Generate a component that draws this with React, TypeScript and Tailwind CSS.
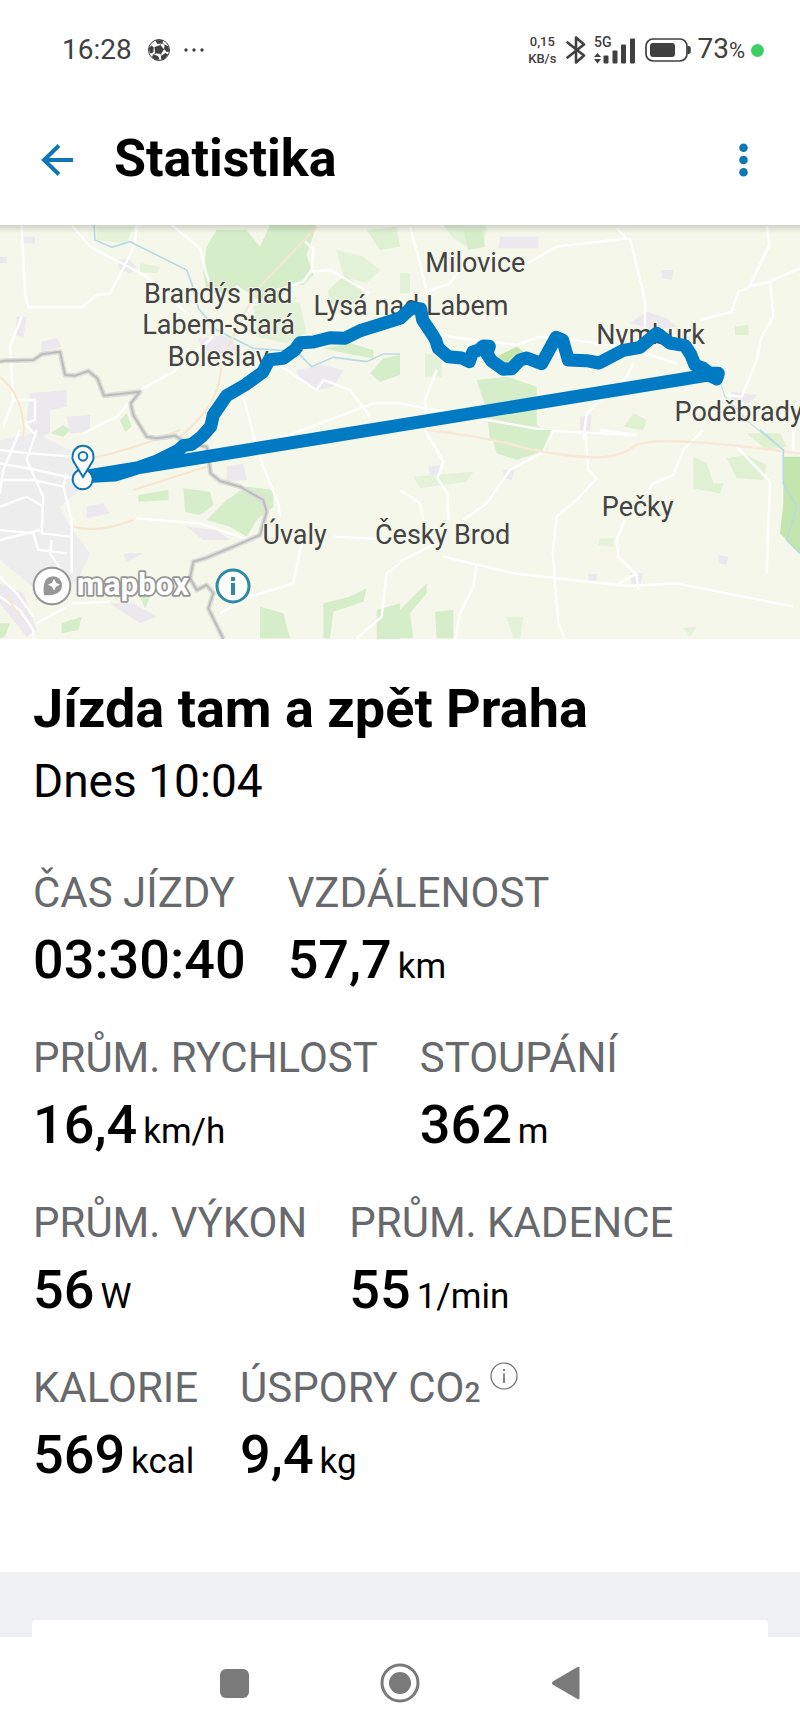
import type { ReactNode } from "react";

interface StatProps {
  label: ReactNode;
  value: string;
  unit?: string;
}

interface Place {
  name: string;
  x: number;
  y: number;
}

// Map units: the viewBox is 2400 x 1242
const places: Place[] = [
  { name: "Brandýs nad", x: 655, y: 233 },
  { name: "Labem-Stará", x: 656, y: 327 },
  { name: "Boleslav", x: 655, y: 422 },
  { name: "Lysá nad Labem", x: 1233, y: 271 },
  { name: "Milovice", x: 1426, y: 140 },
  { name: "Nymburk", x: 1952, y: 358 },
  { name: "Poděbrady", x: 2216, y: 587 },
  { name: "Úvaly", x: 884, y: 957 },
  { name: "Český Brod", x: 1328, y: 957 },
  { name: "Pečky", x: 1913, y: 873 },
];

const route =
  "M250 755 L345 750 L400 733 L470 708 L535 676 L550 662 L575 658 L605 635 L632 605 L640 570 L680 512 L735 480 L788 442 L808 404 L850 400 L885 374 L900 353 L940 351 L990 338 L1035 340 L1080 317 L1200 280 L1235 248 L1262 252 L1268 285 L1298 330 L1307 345 L1315 370 L1345 395 L1385 399 L1408 410 L1418 381 L1435 376 L1450 363 L1468 364 L1460 385 L1475 408 L1510 433 L1535 431 L1560 405 L1580 399 L1625 416 L1668 337 L1688 345 L1705 405 L1760 407 L1797 414 L1870 376 L1920 367 L1970 325 L2010 354 L2055 362 L2072 388 L2085 420 L2110 430 L2130 445 L2155 445 L2150 462 L2125 450 L250 755";

const border =
  "M0 410L15 407 100 405 125 388 180 380 195 450 225 452 265 438 292 460 312 512 420 500 392 535 400 570 440 635 470 640 525 632 560 655 620 665 632 745 660 768 720 785 790 825 800 860 780 930 700 965 615 1000 580 1010 570 1060 590 1095 620 1080 640 1105 625 1150 670 1242";

function StatusBar() {
  return (
    <div className="flex h-24 items-center justify-between pt-1 pr-9 pl-[62px] text-[#404040]">
      <div className="flex items-center">
        <span className="text-[28px] leading-8">16:28</span>
        <svg className="ml-4 size-[22px]" viewBox="0 0 22 22" aria-hidden="true">
          <circle cx="11" cy="11" r="10.5" fill="#fff" stroke="currentColor" />
          <g fill="currentColor">
            <path d="M6.500 8l6-2 3.500 4.500-3 4.500-6-.8z" />
            <path d="M7 1.200L15 1l-.5 3.200-5 .9z" />
            <path d="M16.500 5.500l4 2 .8 5-2.600.5-2.500-3z" />
            <path d="M13 17l4.500-3 2.500 1.500-3.500 4.700-3.300.6z" />
            <path d="M5 15.500l5 1.500 1.500 3.500-3.500.5-4-2.800z" />
            <path d="M.6 9l3-2.500 2.200 2-.6 5-3 1z" />
          </g>
          <path
            d="M12.500 6l1.500-2.200 2.500 1.700M15.500 10l1.500 0M13 14.500v2M8 14l-2.500 1.500"
            fill="none"
            stroke="currentColor"
            strokeWidth=".7"
          />
        </svg>
        <svg className="ml-3.5 h-1 w-5" viewBox="0 0 20 4" fill="currentColor" aria-hidden="true">
          <circle cx="2" cy="2" r="1.700" />
          <circle cx="10" cy="2" r="1.700" />
          <circle cx="18" cy="2" r="1.700" />
        </svg>
      </div>
      <div className="flex items-center">
        <div className="text-center text-[13px] leading-[17px] font-medium">
          <div>0,15</div>
          <div>KB/s</div>
        </div>
        <svg className="ml-2.5 h-[30px] w-5" viewBox="0 0 20 30" aria-label="Bluetooth">
          <path
            d="M1.500 7.500L18 20.500 10 27.500V2.500L18 9.500 1.500 22.500"
            fill="none"
            stroke="currentColor"
            strokeWidth="2.600"
            strokeLinejoin="round"
            strokeLinecap="round"
          />
        </svg>
        <svg className="ml-2 h-9 w-[41px]" viewBox="0 0 41 36" fill="currentColor" aria-hidden="true">
          <text x="0" y="15" fontSize="14" fontWeight="500">
            5G
          </text>
          <path d="M0 25L3.500 21 7 25zM0 27H7L3.500 31.500z" />
          <rect x="9.500" y="23.500" width="5" height="8" rx="1" />
          <rect x="18.500" y="18.500" width="5" height="13" rx="1" />
          <rect x="27" y="12.500" width="5" height="19" rx="1" />
          <rect x="36" y="6.500" width="5" height="25" rx="1" />
        </svg>
        <svg className="ml-2.5 h-6 w-[46px]" viewBox="0 0 46 24" aria-hidden="true">
          <rect x="1" y="1" width="41" height="22" rx="7" fill="none" stroke="currentColor" strokeWidth="1.700" />
          <rect x="5" y="5" width="25" height="14" rx="3" fill="currentColor" />
          <path d="M42.500 8c2 0 3.200.6 3.200 2v4c0 1.400-1.200 2-3.200 2z" fill="currentColor" />
        </svg>
        <span className="ml-1.5 text-[28px] leading-8">
          73<span className="text-[22px]">%</span>
        </span>
        <span className="ml-1.5 size-[13px] rounded-full bg-[#3ccf64]" />
      </div>
    </div>
  );
}

function Header() {
  return (
    <header className="flex h-[129px] items-center px-[37px] pb-0.5 text-[#0f76b5]">
      <button type="button" aria-label="Zpět" className="flex size-10 items-center justify-center">
        <svg className="h-8 w-8" viewBox="0 0 32 32" fill="none" stroke="currentColor" strokeWidth="4">
          <path d="M32 16H3M18 1.500L3 16l15 14.500" />
        </svg>
      </button>
      <h1 className="ml-[37px] flex-1 pb-0.5 text-[52px] leading-[64px] font-bold text-black">Statistika</h1>
      <button type="button" aria-label="Další možnosti" className="flex h-10 w-10 items-center justify-center">
        <svg className="h-[34px] w-[9px]" viewBox="0 0 9 34" fill="currentColor">
          <circle cx="4.500" cy="4.800" r="4.300" />
          <circle cx="4.500" cy="17" r="4.300" />
          <circle cx="4.500" cy="29.200" r="4.300" />
        </svg>
      </button>
    </header>
  );
}

function MapTerrain() {
  return (
    <>
      {/* north-west */}
      <g transform="translate(0 -15)">
        <g fill="#d6edc9">
          <path d="M620 80l30-50 90 0 40 50 30-65 140 0-30 90 20 60-30 30-50 0-30 50-60-10-60-40-40 30-50-10-10-60z" />
          <path d="M760 260l60-30 80 20 20 90-60 30-90-20z" opacity=".6" />
          <path d="M985 210l50-45 40 30 20 40-50 20-60-5zM1100 30l90-10 10 60-60 10z" opacity=".7" />
          <path d="M1010 90l80 20 50 40-40 40-70-20z" opacity=".5" />
          <path d="M1110 460l40-45 50-10v60l-60 20zM970 385l80-15 70 20 0 25-60-10z" />
          <path d="M290 20l110 0-20 50-90-10zM420 130l60 10-10 20-50-5z" opacity=".5" />
          <path d="M150 640l40-25 20 15-20 20zM360 600l20-20 15 40-20 15z" />
        </g>
        <g fill="#ebe9ee">
          <path d="M70 50h35v20h-35zM350 120l30-5 30 25-20 20-30-10zM0 110h20v20H0zM125 365l45-10 15 25-60 15z" />
          <path d="M595 355l90-10 30 40-30 20-80-15zM890 450l80-15 60 15-30 50-50 10-50-30z" />
          <path d="M90 520l110-10 0 50-50 10 0 70-50 20-20-60zM200 590l70-5 0 50-60 5zM50 290l30 0-10 60-25-5z" />
        </g>
        <g fill="none" stroke="#fff" strokeWidth="7">
          <path d="M65 15L75 220 85 262 245 262 290 225 330 220 375 135 405 70 410 15" />
          <path d="M215 15L270 80 375 135 440 170 560 280 M515 15L600 85 620 165 640 220" />
          <path d="M915 65L940 85 935 150 910 185 830 210 M935 155L990 150 1110 220" />
          <path d="M65 290L30 380 40 540 10 620 M40 540H105V600L75 610 110 650" />
          <path d="M420 510L520 455 640 350 M420 510L350 590 250 640 M845 440L950 510 970 480 1050 510 1110 590 M730 530L765 660 M840 655L1120 550H1200" />
        </g>
        <path
          d="M282 15L285 60 335 82 390 65 440 90 560 150 575 190 595 265 650 330 760 385 890 395 935 440 1000 412 1100 425 1150 402 1200 402"
          fill="none"
          stroke="#b9dbe6"
          strokeWidth="5"
        />
        <path d="M0 470Q50 510 65 580T60 660M540 650Q650 560 660 470T780 200L950 20" fill="none" stroke="#f6e6cf" strokeWidth="6" />
      </g>
      {/* north-east */}
      <g transform="translate(1200 -15)">
        <g fill="#d6edc9">
          <path d="M130 15h130l-10 70-40 0-50-30zM0 160h30v60H0zM75 400l50 10 0 60-50 0z" opacity=".6" />
          <path d="M190 30l55 0 10 50-50 10z" />
          <path d="M290 410l60-30 40 30-50 40z" fill="#c5e5ac" />
          <path d="M230 480l90-10 90 30 0 110 30 50-170 0-10-90z" />
          <path d="M1005 320l40-5 0 30-40 0zM670 620l30-40 40 20-10 30z" opacity=".7" />
        </g>
        <g fill="#ebe9ee">
          <path d="M300 50l115 0 0 35-120 0zM785 150l35 0-5 30-30-5zM690 310l50-35 60 20 30 25-60 10zM995 515l80 10-30 25-50-10zM540 590l35-5-5 60-30-10z" />
        </g>
        <g fill="none" stroke="#fff" strokeWidth="7">
          <path d="M30 20L55 110 80 215 150 190 180 150 M380 130L470 80 680 55 650 25 M690 55L735 240V320" />
          <path d="M1100 15L1108 75 1045 205 1015 215 995 275 900 300 M1045 200L1110 185 1200 145 M1110 185L1120 290 1085 350 1070 420 1025 530 980 525" />
          <path d="M110 345L310 370 350 375 420 350 560 365 700 390 830 430 M0 550L100 570 440 632 700 645 M110 450L75 540 85 660 M700 430L680 470 560 580 550 660" />
        </g>
        <path d="M960 485L975 530 1040 600 1110 660" fill="none" stroke="#c7e2e6" strokeWidth="4" />
      </g>
      {/* south-west */}
      <g transform="translate(0 615)">
        <g fill="#d6edc9">
          <path d="M415 195l90-15 0 30-90 5z" />
          <path d="M550 175l80 10 10 40-40 30-45-10z" />
          <path d="M680 210l60-40 80 10 0 50-50 40-30 50-50-30-70-20z" />
          <path d="M780 530l70 20 20 75-90 0zM970 520l80-20 50-25-10 40-90 30-10 80h-20zM1130 540l70-20v110h-70z" />
          <path d="M185 580l60-20-10 40-50 10zM0 580l30 0-15 40-15 5zM420 500l30 0-15 35z" />
        </g>
        <g fill="#ebe9ee">
          <path d="M0 30l110-20 100 50 30 70 0 50-60 50 30 60 60 80-40 90-120 20-110-90z" opacity=".75" />
          <path d="M260 230l50-10 20 30-70 15zM680 110l50-10 10 50-60 5zM560 290l90 10 40 30-80 0zM370 370l60 0-50 25zM330 520l70 0 70 40-50 20zM0 460l70 30 40 110-30 20-80-100z" />
        </g>
        <g fill="none" stroke="#fff" strokeWidth="7">
          <path d="M0 60L90 70 220 80M0 100L110 120 220 145M0 150L100 150 190 170M60 0L10 120 0 190M110 0L80 90 130 200 125 310 210 320M200 130L190 170 215 270 215 430M0 300L100 310 115 360 200 370M0 330L120 300M0 230L80 200 130 230M155 330L150 370 190 430M0 500L60 540 100 600V630M110 580L220 520 330 515M100 560L50 490 0 440" />
          <path d="M760 20L790 110 835 220 840 260M905 340L880 460 750 500 660 550M410 265L600 280 750 330M1000 320L1200 330M1200 400L1160 430 1145 560 1070 625" />
        </g>
        <path d="M250 90Q400 60 540 0M220 290Q300 310 400 270M400 180L620 110M20 500L60 560" fill="none" stroke="#f6e6cf" strokeWidth="6" />
      </g>
      {/* south-east */}
      <g transform="translate(1200 615)">
        <g fill="#d6edc9">
          <path d="M270 0h190l-20 60-90 30-60-20z" />
          <path d="M880 80l40 20 20 60 30 0-10 30-80-15zM980 85l60-10 60 30-10 45-80-5zM1040 10l100 0 20 40-60 10z" opacity=".7" />
          <path d="M1150 80h50v290l-60-60 10-90z" fill="#c5e5ae" />
          <path d="M40 140l180-15-20 30-140 20zM600 325l40 0 0 25-45-5zM320 560l50 0-10 65h-20zM850 595l40-5-20 30z" opacity=".5" />
          <path d="M0 540l80-80 0 30-50 60 10 75H0zM105 545l55-5 0 85h-50z" />
        </g>
        <g fill="#ebe9ee">
          <path d="M85 110l35-5 0 30-30 0zM310 120l35 0-10 30-25-5zM955 375l30 5-5 25-25-5zM565 432l25 0 0 20-25 0zM690 430l40 0-10 35-25-5z" />
        </g>
        <g fill="none" stroke="#fff" strokeWidth="7">
          <path d="M75 0L130 95 112 145 142 190 145 270M460 0L430 65 330 120 260 220 190 270M555 0L565 120 590 145 530 210 470 260 458 370 475 580 495 630M0 180L60 220 70 270M0 395L100 345M230 400L220 470 180 550 165 630" />
          <path d="M910 0L850 60 820 135 760 160 730 200M675 270L650 330 655 380 710 435 715 480M710 430L650 465M130 380L340 430 680 468 830 460 1180 530M1010 50L1110 155 1100 430M600 0L710 15M1180 0V65H1200" />
        </g>
        <path d="M80 0Q250 20 340 45T540 80 700 50 1200 70" fill="none" stroke="#f8e8d8" strokeWidth="8" />
        <path d="M1080 0L1150 60 1150 160 1190 230 1160 330 1200 370" fill="none" stroke="#b5dde0" strokeWidth="5" />
      </g>
      <g fill="none" strokeLinejoin="round">
        <path d={border} stroke="#dcdcd8" strokeWidth="15" />
        <path d={border} stroke="#bcbcba" strokeWidth="6" />
      </g>
    </>
  );
}

function RouteMap() {
  return (
    <section aria-label="Mapa trasy" className="relative">
      <svg className="block w-full bg-[#f5f7ea]" viewBox="0 0 2400 1242">
        <MapTerrain />
        <g fill="#434343" fontSize="81" textAnchor="middle" stroke="#f5f7ea" strokeWidth="6" paintOrder="stroke">
          {places.map((place) => (
            <text key={place.name} x={place.x} y={place.y}>
              {place.name}
            </text>
          ))}
        </g>
        <path d={route} fill="none" stroke="#007ac2" strokeWidth="39" strokeLinejoin="round" />
        <g fill="#fff" stroke="#0f76b5" strokeWidth="6">
          <circle cx="248" cy="763" r="30" />
          <path d="M249 756L224 715C215 702 218 693 218 693A31 31 0 0 1 280 693C280 693 283 702 274 715Z" />
          <circle cx="249" cy="694" r="13" />
        </g>
      </svg>
      <div className="absolute inset-x-0 top-0 h-2 bg-linear-to-b from-black/15 to-transparent" />
      <div className="absolute bottom-[33px] left-8 flex items-center gap-6">
        <svg className="h-[40px] w-[159px]" viewBox="0 0 477 120" aria-label="mapbox">
          <circle cx="60" cy="60" r="55" fill="#fff" stroke="#969696" strokeWidth="6" />
          <path d="M36 88C32 50 40 32 64 31A27 27 0 0 1 90 58C90 80 70 89 36 88Z" fill="#969696" />
          <path d="M66 38l6 12 12 6-12 6-6 12-6-12-12-6 12-6z" fill="#fff" />
          <text
            x="134"
            y="88"
            fontSize="94"
            fontWeight="700"
            fill="#fff"
            stroke="#969696"
            strokeWidth="11"
            strokeLinejoin="round"
            paintOrder="stroke"
          >
            mapbox
          </text>
        </svg>
        <button type="button" aria-label="Informace o mapě" className="size-9 text-[#2f8aa3]">
          <svg className="size-9" viewBox="0 0 36 36">
            <circle cx="18" cy="18" r="16" fill="#fff" fillOpacity=".8" stroke="currentColor" strokeWidth="3" />
            <path d="M16 9h4v4h-4zM16 15h4v12h-4z" fill="currentColor" />
          </svg>
        </button>
      </div>
    </section>
  );
}

function Stat({ label, value, unit }: StatProps) {
  return (
    <div>
      <dt className="flex text-[42px] leading-[64px] text-[#67696c]">{label}</dt>
      <dd className="text-[54px] leading-[70px] font-medium">
        {value}
        {unit && <span className="ml-1.5 text-[35px] leading-none font-normal">{unit}</span>}
      </dd>
    </div>
  );
}

function Co2Label() {
  return (
    <>
      <span>
        ÚSPORY CO<span className="text-[28px] leading-none font-medium">2</span>
      </span>
      <button type="button" aria-label="Informace o úsporách" className="mt-1.5 ml-2.5 size-7">
        <svg className="size-7" viewBox="0 0 28 28" fill="none" stroke="currentColor">
          <circle cx="14" cy="14" r="13" strokeWidth="1.200" />
          <path d="M14 11.500V21" strokeWidth="1.600" />
          <circle cx="14" cy="8" r=".7" fill="currentColor" />
        </svg>
      </button>
    </>
  );
}

function NavBar() {
  return (
    <nav className="flex h-24 items-center justify-center gap-[126px] pb-1 text-[#7a7a7a]">
      <button type="button" aria-label="Poslední aplikace" className="flex size-10 items-center justify-center">
        <span className="size-[29px] rounded-md bg-current" />
      </button>
      <button type="button" aria-label="Domů" className="size-10">
        <svg className="size-10" viewBox="0 0 40 40">
          <circle cx="20" cy="20" r="18" fill="none" stroke="currentColor" strokeWidth="3" />
          <circle cx="20" cy="20" r="11" fill="currentColor" />
        </svg>
      </button>
      <button type="button" aria-label="Zpět" className="flex size-10 items-center justify-center">
        <svg className="h-[34px] w-7" viewBox="0 0 28 34" fill="currentColor">
          <path d="M1 15.200L25.500 1Q27.500 0 27.500 2v30q0 2-2 1L1 18.800q-2-1.800 0-3.600z" />
        </svg>
      </button>
    </nav>
  );
}

export default function App() {
  return (
    <div className="bg-white font-[Roboto,'Open_Sans',sans-serif] text-black">
      <StatusBar />
      <Header />
      <RouteMap />
      <main className="px-[33px] pt-[38px] pb-[82px]">
        <h2 className="text-[54px] leading-[64px] font-bold">Jízda tam a zpět Praha</h2>
        <p className="mt-2.5 text-[46px] leading-[60px]">Dnes 10:04</p>
        <dl className="mt-[50px] flex flex-col gap-[31px]">
          <div className="flex gap-[42px]">
            <Stat label="ČAS JÍZDY" value="03:30:40" />
            <Stat label="VZDÁLENOST" value="57,7" unit="km" />
          </div>
          <div className="flex gap-[42px]">
            <Stat label="PRŮM. RYCHLOST" value="16,4" unit="km/h" />
            <Stat label="STOUPÁNÍ" value="362" unit="m" />
          </div>
          <div className="flex gap-[42px]">
            <Stat label="PRŮM. VÝKON" value="56" unit="W" />
            <Stat label="PRŮM. KADENCE" value="55" unit="1/min" />
          </div>
          <div className="flex gap-[42px]">
            <Stat label="KALORIE" value="569" unit="kcal" />
            <Stat label={<Co2Label />} value="9,4" unit="kg" />
          </div>
        </dl>
      </main>
      <div className="bg-[#eef0f2] px-8 pt-12">
        <div className="h-[17px] rounded-t bg-white" />
      </div>
      <NavBar />
    </div>
  );
}
